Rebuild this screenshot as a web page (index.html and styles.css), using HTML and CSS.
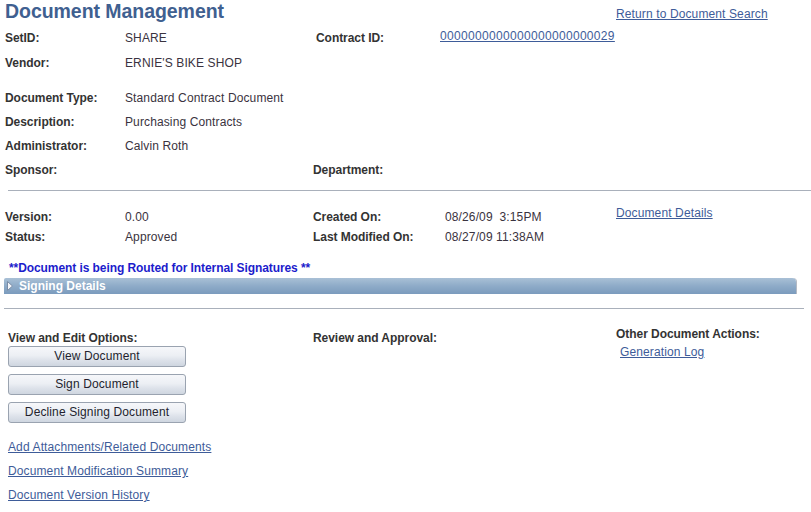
FILE: index.html
```html
<!DOCTYPE html>
<html>
<head>
<meta charset="utf-8">
<title>Document Management</title>
<link rel="stylesheet" href="styles.css">
</head>
<body>
<div class="page">
  <div class="header">
    <h1 class="title">Document Management</h1>
    <a class="link return" href="#">Return to Document Search</a>
  </div>

  <div class="row r1">
    <div class="c1 lbl">SetID:</div>
    <div class="c2 val">SHARE</div>
    <div class="c3 lbl shift3">Contract ID:</div>
    <div class="c4"><a class="link raised digits" href="#">0000000000000000000000029</a></div>
  </div>
  <div class="row r2">
    <div class="c1 lbl">Vendor:</div>
    <div class="c2 val">ERNIE'S BIKE SHOP</div>
  </div>
  <div class="row r3">
    <div class="c1 lbl">Document Type:</div>
    <div class="c2 val">Standard Contract Document</div>
  </div>
  <div class="row">
    <div class="c1 lbl">Description:</div>
    <div class="c2 val">Purchasing Contracts</div>
  </div>
  <div class="row">
    <div class="c1 lbl">Administrator:</div>
    <div class="c2 val">Calvin Roth</div>
  </div>
  <div class="row">
    <div class="c1 lbl">Sponsor:</div>
    <div class="c2 val"></div>
    <div class="c3 lbl">Department:</div>
  </div>

  <div class="rule rule1"></div>

  <div class="row2 first">
    <div class="c1 lbl">Version:</div>
    <div class="c2 val">0.00</div>
    <div class="c3 lbl">Created On:</div>
    <div class="c4 val pad5">08/26/09&nbsp; 3:15PM</div>
    <div class="c5"><a class="link high" href="#">Document Details</a></div>
  </div>
  <div class="row2">
    <div class="c1 lbl">Status:</div>
    <div class="c2 val">Approved</div>
    <div class="c3 lbl">Last Modified On:</div>
    <div class="c4 val pad5">08/27/09 11:38AM</div>
  </div>

  <div class="message">**Document is being Routed for Internal Signatures **</div>

  <div class="bar">
    <svg class="tri" width="6" height="10" viewBox="0 0 6 10"><polygon points="0.5,0.5 5.5,5 0.5,9.5" fill="#f4f6fa" stroke="#7a8ca6" stroke-width="1"/></svg>
    <span class="bar-text">Signing Details</span>
  </div>

  <div class="rule rule2"></div>

  <div class="bottom">
    <div class="col col1">
      <div class="lbl line14">View and Edit Options:</div>
      <div class="buttons">
        <button class="btn">View Document</button>
        <button class="btn">Sign Document</button>
        <button class="btn">Decline Signing Document</button>
      </div>
      <div class="links">
        <a class="link" href="#">Add Attachments/Related Documents</a>
        <a class="link" href="#">Document Modification Summary</a>
        <a class="link" href="#">Document Version History</a>
      </div>
    </div>
    <div class="col col2">
      <div class="lbl line14">Review and Approval:</div>
    </div>
    <div class="col col3">
      <div class="lbl line14">Other Document Actions:</div>
      <a class="link genlog" href="#">Generation Log</a>
    </div>
  </div>
</div>
</body>
</html>
```

FILE: styles.css
```css
* { box-sizing: border-box; }

body {
  margin: 0;
  background: #ffffff;
  font-family: "Liberation Sans", Arial, sans-serif;
  font-size: 12px;
  letter-spacing: 0.12px;
  color: #333333;
}

.page {
  width: 811px;
}

.link {
  color: #3e5c99;
  text-decoration: underline;
}

.digits {
  letter-spacing: 0.32px;
}

.lbl {
  font-weight: bold;
  letter-spacing: -0.05px;
  color: #333333;
}

.val {
  color: #3a3340;
}

/* header */
.header {
  display: flex;
  height: 26px;
}

.title {
  margin: 0;
  width: 616px;
  padding-left: 5px;
  font-size: 19.5px;
  line-height: 22px;
  font-weight: bold;
  letter-spacing: -0.05px;
  color: #3f6090;
}

.return {
  padding-top: 7px;
  line-height: 14px;
  align-self: flex-start;
}

/* field rows */
.row {
  display: flex;
  line-height: 24px;
  height: 24px;
  padding-left: 5px;
}

.r2 { margin-top: 1px; }
.r3 { margin-top: 11px; }

.c1 { width: 120px; }
.c2 { width: 188px; }
.c3 { width: 127px; }
.c4 { width: 176px; }

.shift3 { padding-left: 3px; }
.pad5 { padding-left: 5px; }

.raised {
  display: inline-block;
  line-height: 20px;
  vertical-align: top;
}

.rule {
  height: 1px;
  background: #a9b0bb;
}

.rule1 {
  margin-top: 8px;
  margin-left: 8px;
}

.row2 {
  display: flex;
  line-height: 20px;
  height: 20px;
  padding-left: 5px;
}

.row2.first { margin-top: 16px; }

.high {
  display: inline-block;
  line-height: 12px;
  vertical-align: top;
}

.message {
  margin-top: 14px;
  padding-left: 9px;
  line-height: 14px;
  font-weight: bold;
  letter-spacing: -0.08px;
  color: #1c1ccc;
}

/* signing details bar */
.bar {
  margin-top: 3px;
  margin-left: 4px;
  width: 792px;
  height: 16px;
  display: flex;
  align-items: center;
  padding-left: 3px;
  background: linear-gradient(#a9c0d6, #8eabc8 50%, #7b9bbd);
  border-radius: 2px 4px 0 0;
  box-shadow: 1px 0 0 #b4bac4;
}

.tri {
  display: block;
  margin-right: 6px;
}

.bar-text {
  color: #ffffff;
  font-weight: bold;
  letter-spacing: 0;
  line-height: 16px;
}

.rule2 {
  margin-top: 14px;
  margin-left: 4px;
  width: 800px;
}

/* bottom section */
.bottom {
  display: flex;
  margin-top: 18px;
  padding-left: 8px;
}

.line14 { line-height: 14px; }

.col1 { width: 305px; padding-top: 4px; }
.col2 { width: 303px; padding-top: 4px; }
.col3 { display: flex; flex-direction: column; align-items: flex-start; }

.buttons {
  display: flex;
  flex-direction: column;
  gap: 7px;
  margin-top: 1px;
}

.btn {
  display: block;
  width: 178px;
  height: 21px;
  margin: 0;
  padding: 0;
  border: 1px solid #9aa3b0;
  border-radius: 3px;
  background: linear-gradient(#f6f7fa, #eceff4 45%, #dde2ea 70%, #cfd6e0);
  font-family: "Liberation Sans", Arial, sans-serif;
  font-size: 12px;
  letter-spacing: 0.12px;
  line-height: 19px;
  color: #231f2e;
  text-align: center;
}

.links {
  margin-top: 12px;
  display: flex;
  flex-direction: column;
  align-items: flex-start;
  line-height: 24px;
}

.genlog {
  margin-top: 4px;
  margin-left: 4px;
  line-height: 14px;
}
```
